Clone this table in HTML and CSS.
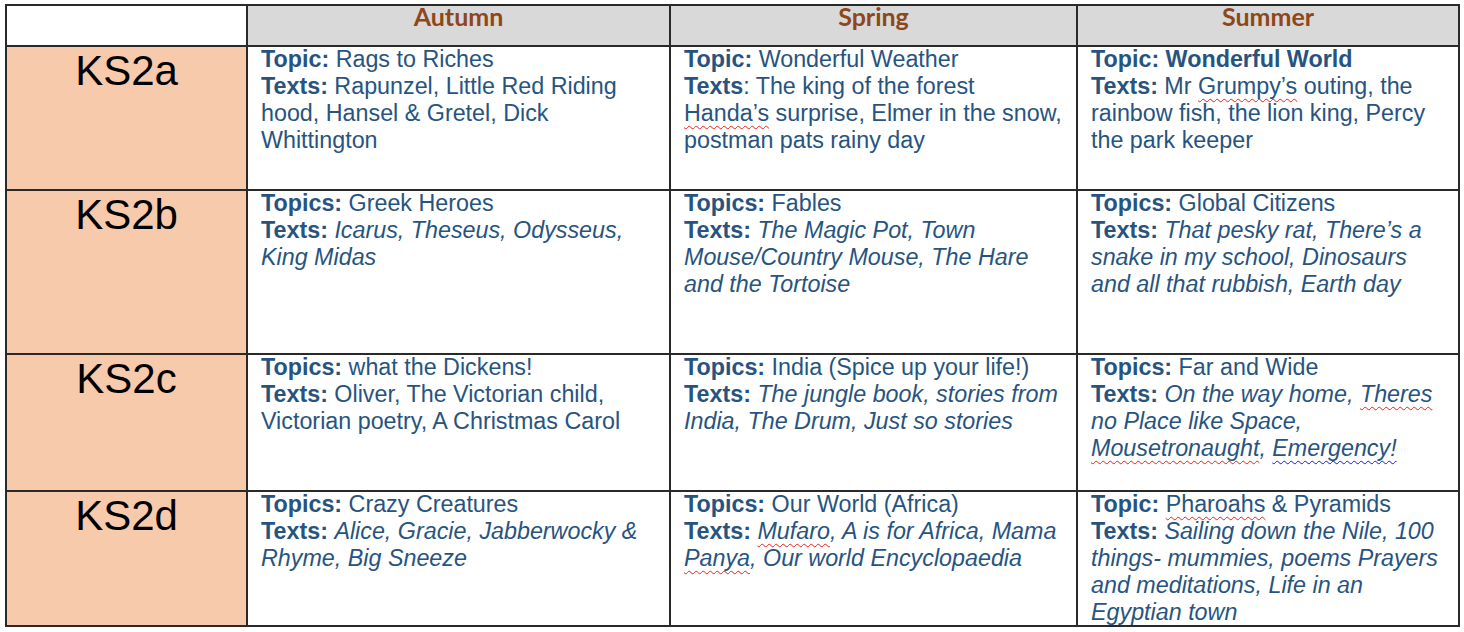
FILE: index.html
```html
<!DOCTYPE html>
<html lang="en">
<head>
<meta charset="utf-8">
<title>KS2 Topics and Texts</title>
<link rel="stylesheet" href="styles.css">
</head>
<body>
<div class="plan" role="table">
  <div class="cell corner" role="columnheader"></div>
  <div class="cell head" role="columnheader"><span>Autumn</span></div>
  <div class="cell head" role="columnheader"><span>Spring</span></div>
  <div class="cell head" role="columnheader"><span>Summer</span></div>

  <div class="cell stage" role="rowheader">KS2a</div>
  <div class="cell body" role="cell"><p><b>Topic:</b> Rags to Riches<br><b>Texts:</b> Rapunzel, Little Red Riding hood, Hansel &amp; Gretel, Dick Whittington</p></div>
  <div class="cell body" role="cell"><p><b>Topic:</b> Wonderful Weather<br><b>Texts</b>: The king of the forest<br><span class="sp">Handa’s</span> surprise, Elmer in the snow, postman pats rainy day</p></div>
  <div class="cell body" role="cell"><p><b>Topic: Wonderful World</b><br><b>Texts:</b> Mr <span class="sp">Grumpy’s</span> outing, the rainbow fish, the lion king, Percy the park keeper</p></div>

  <div class="cell stage" role="rowheader">KS2b</div>
  <div class="cell body" role="cell"><p><b>Topics:</b> Greek Heroes<br><b>Texts:</b> <i>Icarus, Theseus, Odysseus, King Midas</i></p></div>
  <div class="cell body" role="cell"><p><b>Topics:</b> Fables<br><b>Texts:</b> <i>The Magic Pot, Town Mouse/Country Mouse, The Hare and the Tortoise</i></p></div>
  <div class="cell body" role="cell"><p><b>Topics:</b> Global Citizens<br><b>Texts:</b> <i>That pesky rat, There’s a snake in my school, Dinosaurs and all that rubbish, Earth day</i></p></div>

  <div class="cell stage" role="rowheader">KS2c</div>
  <div class="cell body" role="cell"><p><b>Topics:</b> what the Dickens!<br><b>Texts:</b> Oliver, The Victorian child, Victorian poetry, A Christmas Carol</p></div>
  <div class="cell body" role="cell"><p><b>Topics:</b> India (Spice up your life!)<br><b>Texts:</b> <i>The jungle book, stories from India, The Drum, Just so stories</i></p></div>
  <div class="cell body" role="cell"><p><b>Topics:</b> Far and Wide<br><b>Texts:</b> <i>On the way home, <span class="sp">Theres</span> no Place like Space, <span class="sp">Mousetronaught</span>, <span class="sp gram">Emergency!</span></i></p></div>

  <div class="cell stage" role="rowheader">KS2d</div>
  <div class="cell body" role="cell"><p><b>Topics:</b> Crazy Creatures<br><b>Texts:</b> <i>Alice, Gracie, Jabberwocky &amp; Rhyme, Big Sneeze</i></p></div>
  <div class="cell body" role="cell"><p><b>Topics:</b> Our World (Africa)<br><b>Texts:</b> <i><span class="sp">Mufaro</span>, A is for Africa, Mama <span class="sp">Panya</span>, Our world Encyclopaedia</i></p></div>
  <div class="cell body" role="cell"><p><b>Topic:</b> <span class="sp">Pharoahs</span> &amp; Pyramids<br><b>Texts:</b> <i>Sailing down the Nile, 100 things- mummies, poems Prayers and meditations, Life in an Egyptian town</i></p></div>
</div>
</body>
</html>
```

FILE: styles.css
```css
html, body {
  margin: 0;
  padding: 0;
  background: #ffffff;
}

body {
  font-family: "Liberation Sans", Arial, sans-serif;
}

.plan {
  display: grid;
  grid-template-columns: 241px 423px 407px 382px;
  grid-template-rows: 41px 144px 164px 137px 135px;
  width: 1455px;
  margin: 4px 0 0 5px;
  border-top: 2px solid #2a2a2a;
  border-left: 2px solid #2a2a2a;
  box-sizing: border-box;
}

.cell {
  box-sizing: border-box;
  border-right: 2px solid #2a2a2a;
  border-bottom: 2px solid #2a2a2a;
}

.corner {
  background: #ffffff;
}

.head {
  background: #d9d9d9;
  color: #8e4719;
  font-family: Lato, "Liberation Sans", sans-serif;
  font-weight: 700;
  font-size: 25px;
  line-height: 21px;
  text-align: center;
  padding-top: 0;
}

.stage {
  background: #f7caac;
  color: #000000;
  font-size: 42px;
  line-height: 1.15;
  text-align: center;
}

.body {
  background: #ffffff;
  color: #27547f;
  font-size: 23.3px;
  line-height: 27px;
  padding: 0 6px 0 13px;
}

.body p {
  margin: -1px 0 0 0;
}

.body b {
  font-weight: 700;
}

.sp {
  text-decoration: underline wavy #e8231e;
  text-decoration-thickness: 1px;
  text-underline-offset: 4px;
  text-decoration-skip-ink: none;
}

.sp.gram {
  text-decoration-color: #1a1ad8;
}
```
